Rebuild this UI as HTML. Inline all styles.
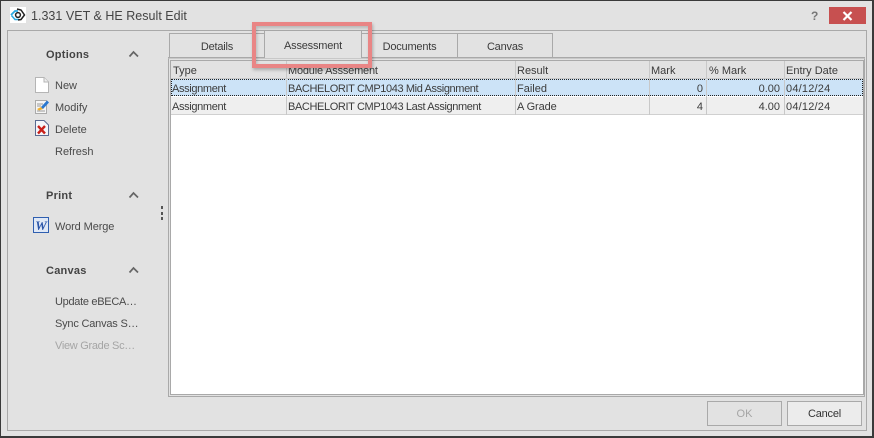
<!DOCTYPE html>
<html><head><meta charset="utf-8">
<style>
html,body{margin:0;padding:0;background:#e2e2e2}
#r{position:relative;width:874px;height:438px;overflow:hidden;background:#e2e2e2;font-family:"Liberation Sans",sans-serif;font-size:11px;color:#3b3b3b}
#r div,#r svg{position:absolute}
.t{white-space:nowrap;line-height:14px;height:14px;margin-top:1px}
.h{font-weight:bold;color:#444;font-size:11px;letter-spacing:.25px}
.b{color:#4a4a4a}
.tab{background:#e2e2e2;border:1px solid #a9a9a9;border-bottom:none;box-sizing:border-box;text-align:center;line-height:27px;color:#3b3b3b;letter-spacing:-.2px}
.v{width:1px;background:#c8c8c8}
</style></head><body>
<div id="r">
<div style="left:0;top:0;width:874px;height:438px;box-sizing:border-box;border:1px solid #3a3a3a;border-right-width:2px;border-bottom-width:2px"></div>
<div style="left:10px;top:7px;width:16px;height:16px;background:#fff"></div>
<svg style="left:10px;top:7px" width="16" height="16" viewBox="0 0 16 16"><path d="M1 8L5 4H8" fill="none" stroke="#29a8e0" stroke-width="1.8"/><path d="M1.500 8.500L5 12.500H9" fill="none" stroke="#29a8e0" stroke-width="1.500"/><path d="M7 2L11 3L14.500 8L11 12.500L8 13" fill="none" stroke="#222" stroke-width="1.500"/><circle cx="8" cy="8" r="2.400" fill="none" stroke="#222" stroke-width="1.500"/></svg>
<div class="t" style="left:31px;top:8px;font-size:12.5px;color:#444;letter-spacing:.02px">1.331 VET &amp; HE Result Edit</div>
<div class="t" style="left:811px;top:8px;font-weight:bold;font-size:12px;color:#777">?</div>
<div style="left:829px;top:7px;width:37px;height:17px;background:#c75050"></div>
<svg style="left:842px;top:11px" width="11" height="10" viewBox="0 0 11 10"><path d="M1.500 1L9.500 9M9.500 1L1.500 9" stroke="#fff" stroke-width="2.200"/></svg>

<div style="left:7px;top:30px;width:860px;height:401px;box-sizing:border-box;border:1px solid #a9a9a9"></div>

<div class="t h" style="left:46px;top:47px">Options</div>
<svg style="left:128px;top:50px" width="12" height="8" viewBox="0 0 12 8"><path d="M1.500 6.500L5.500 2L10 6.500" fill="none" stroke="#666" stroke-width="1.700"/></svg>
<svg style="left:35px;top:77px" width="14" height="16" viewBox="0 0 14 16"><path d="M.5.500H9L13.500 5V15.500H.5Z" fill="#fff" stroke="#b5b5b5"/><path d="M9 .5V5H13.500" fill="#eee" stroke="#b5b5b5"/></svg>
<div class="t b" style="left:55px;top:78px">New</div>
<svg style="left:35px;top:98px" width="15" height="17" viewBox="0 0 15 17"><rect x=".5" y="2.500" width="11" height="13" fill="#f5f5f5" stroke="#aaa"/><path d="M2 6H8M2 8H6M2 13H10" stroke="#999"/><path d="M2 11L6 9L8 11L4 12.500Z" fill="#f0b030"/><path d="M6 9L12 2.500L14 4.500L8 11Z" fill="#2a78d0"/></svg>
<div class="t b" style="left:55px;top:100px">Modify</div>
<svg style="left:35px;top:120px" width="14" height="17" viewBox="0 0 14 17"><path d="M.5.500H9L13.500 5V15.500H.5Z" fill="#f4f6fa" stroke="#5a6a90"/><path d="M3 6L10 13.500M10 6L3 13.500" stroke="#c8201a" stroke-width="2.400"/></svg>
<div class="t b" style="left:55px;top:122px">Delete</div>
<div class="t b" style="left:55px;top:144px">Refresh</div>

<div class="t h" style="left:46px;top:188px">Print</div>
<svg style="left:128px;top:191px" width="12" height="8" viewBox="0 0 12 8"><path d="M1.500 6.500L5.500 2L10 6.500" fill="none" stroke="#666" stroke-width="1.700"/></svg>
<div style="left:161px;top:206px;width:2px;height:3px;background:#555"></div>
<div style="left:161px;top:212px;width:2px;height:3px;background:#555"></div>
<div style="left:161px;top:217px;width:2px;height:3px;background:#555"></div>
<div style="left:33px;top:217px;width:16px;height:16px;box-sizing:border-box;border:1px solid #2f5fb0;background:#dfe8f6"></div>
<div class="t" style="left:34px;top:217px;width:14px;text-align:center;font:italic bold 13px 'Liberation Serif',serif;color:#2a55a8">W</div>
<div class="t b" style="left:55px;top:219px;letter-spacing:-.1px">Word Merge</div>

<div class="t h" style="left:46px;top:263px">Canvas</div>
<svg style="left:128px;top:266px" width="12" height="8" viewBox="0 0 12 8"><path d="M1.500 6.500L5.500 2L10 6.500" fill="none" stroke="#666" stroke-width="1.700"/></svg>
<div class="t b" style="left:55px;top:294px;letter-spacing:-.3px">Update eBECA…</div>
<div class="t b" style="left:55px;top:316px;letter-spacing:-.2px">Sync Canvas S…</div>
<div class="t" style="left:55px;top:338px;color:#a5a5a5;letter-spacing:-.3px">View Grade Sc…</div>

<div class="tab" style="left:169px;top:33px;width:96px;height:25px">Details</div>
<div class="tab" style="left:361px;top:33px;width:97px;height:25px;line-height:27px">Documents</div>
<div class="tab" style="left:457px;top:33px;width:96px;height:25px;line-height:27px">Canvas</div>
<div style="left:168px;top:57px;width:697px;height:1px;background:#a9a9a9"></div>
<div class="tab" style="left:264px;top:30px;width:98px;height:29px;line-height:31px;border-bottom:1px solid #e2e2e2">Assessment</div>

<div style="left:168px;top:58px;width:697px;height:339px;box-sizing:border-box;border:1px solid #a9a9a9;border-top-color:#c8c8c8;background:#e2e2e2"></div>
<div style="left:170px;top:60px;width:694px;height:335px;box-sizing:border-box;border:1px solid #a9a9a9;background:#fff"></div>

<div style="left:171px;top:61px;width:692px;height:18px;background:#e2e2e2"></div>
<div style="left:171px;top:78px;width:692px;height:1px;background:#c8c8c8"></div>
<div style="left:171px;top:79px;width:692px;height:17px;background:#cce3f7"></div>
<div style="left:171px;top:79px;width:692px;height:17px;box-sizing:border-box;border:1px dotted #222"></div>
<div style="left:171px;top:97px;width:692px;height:17px;background:#efefef"></div>
<div style="left:171px;top:114px;width:692px;height:1px;background:#d0d0d0"></div>
<div class="v" style="left:286px;top:61px;height:54px"></div>
<div class="v" style="left:515px;top:61px;height:54px"></div>
<div class="v" style="left:649px;top:61px;height:54px"></div>
<div class="v" style="left:706px;top:61px;height:54px"></div>
<div class="v" style="left:784px;top:61px;height:54px"></div>

<div class="t" style="left:173px;top:63px">Type</div>
<div class="t" style="left:288px;top:63px;letter-spacing:-.2px">Module Asssement</div>
<div class="t" style="left:517px;top:63px">Result</div>
<div class="t" style="left:651px;top:63px">Mark</div>
<div class="t" style="left:709px;top:63px">% Mark</div>
<div class="t" style="left:786px;top:63px">Entry Date</div>

<div class="t" style="left:172px;top:81px;letter-spacing:-.35px">Assignment</div>
<div class="t" style="left:288px;top:81px;letter-spacing:-.38px">BACHELORIT CMP1043 Mid Assignment</div>
<div class="t" style="left:517px;top:81px">Failed</div>
<div class="t" style="left:650px;top:81px;width:53px;text-align:right">0</div>
<div class="t" style="left:707px;top:81px;width:73px;text-align:right">0.00</div>
<div class="t" style="left:786px;top:81px;letter-spacing:.2px">04/12/24</div>

<div class="t" style="left:172px;top:99px;letter-spacing:-.35px">Assignment</div>
<div class="t" style="left:288px;top:99px;letter-spacing:-.38px">BACHELORIT CMP1043 Last Assignment</div>
<div class="t" style="left:517px;top:99px;letter-spacing:-.1px">A Grade</div>
<div class="t" style="left:650px;top:99px;width:53px;text-align:right">4</div>
<div class="t" style="left:707px;top:99px;width:73px;text-align:right">4.00</div>
<div class="t" style="left:786px;top:99px;letter-spacing:.2px">04/12/24</div>

<div style="left:707px;top:401px;width:75px;height:25px;box-sizing:border-box;border:1px solid #a9a9a9;text-align:center;line-height:25px;color:#a5a5a5">OK</div>
<div style="left:787px;top:401px;width:75px;height:25px;box-sizing:border-box;border:1px solid #a9a9a9;background:#ececec;text-align:center;line-height:25px;color:#333;letter-spacing:-.2px">Cancel</div>

<div style="left:252px;top:22px;width:120px;height:46px;box-sizing:border-box;border:4px solid #e98585;box-shadow:1px 2px 3px rgba(0,0,0,.25),inset 1px 2px 3px rgba(0,0,0,.2)"></div>
</div>
</body></html>
